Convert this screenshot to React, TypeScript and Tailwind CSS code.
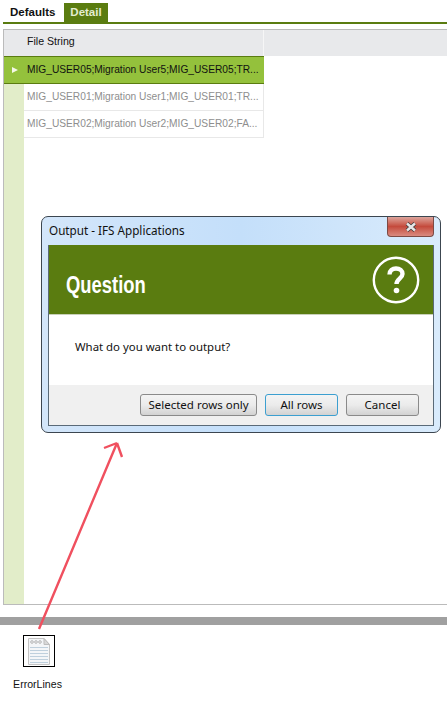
import React from "react";

const gridFont = "font-['Liberation_Sans',sans-serif]";

function DocIcon() {
  return (
    <svg width="24" height="29" viewBox="0 0 24 29">
      <path d="M1.5 1.5H17L22.5 7.5V27.5H1.5Z" fill="#f4f6f8" stroke="#c4c4c4" />
      <path d="M17 1.5V7.5H22.5Z" fill="#d8d8d8" stroke="#bdbdbd" />
      <circle cx="5" cy="5" r="1.3" fill="none" stroke="#b5b5b5" />
      <circle cx="9" cy="5" r="1.3" fill="none" stroke="#b5b5b5" />
      <circle cx="13" cy="5" r="1.3" fill="none" stroke="#b5b5b5" />
      <path
        d="M3 10.5H21M3 13.5H21M3 16.5H21M3 19.5H21M3 22.5H21M3 25.5H21"
        stroke="#bfd0dd"
        strokeWidth="1"
      />
    </svg>
  );
}

function DialogButton({ label, primary, width }: { label: string; primary?: boolean; width: string }) {
  return (
    <div
      className={`${width} flex h-[22px] items-center justify-center rounded-[3px] border bg-gradient-to-b from-[#f4f4f4] via-[#ebebeb] to-[#d2d2d2] text-[11.5px] text-[#111] ${
        primary ? "border-[#3c9fd0]" : "border-[#8a8a8a]"
      }`}
    >
      {label}
    </div>
  );
}

function OutputDialog() {
  return (
    <div className="absolute top-[216px] left-[41px] flex h-[217px] w-[400px] flex-col rounded-[7px] border border-[#3c4650] bg-gradient-to-r from-[#d3e6fa] via-[#c4dffa] to-[#d9ebfc] px-[6px] pb-[6px] font-['Noto_Sans',sans-serif]">
      <div className="flex h-[28px] shrink-0 items-start justify-between">
        <span className="pt-[4px] pl-[1px] text-[11.7px] leading-[18px] text-[#111]">Output - IFS Applications</span>
        <div className="flex h-[20px] w-[47px] items-center justify-center rounded-b-[4px] border border-t-0 border-[#7d4a44] bg-gradient-to-b from-[#dca49c] via-[#c44a3c] to-[#d98a80]">
          <svg width="14" height="10" viewBox="0 0 14 10">
            <path d="M3 1.5L11 8.5M11 1.5L3 8.5" stroke="#3c3c3c" strokeWidth="4" />
            <path d="M3 1.5L11 8.5M11 1.5L3 8.5" stroke="#e8e8e8" strokeWidth="2.4" />
          </svg>
        </div>
      </div>
      <div className="flex grow flex-col border border-t-0 border-[#5a6a78] bg-white">
        <div className="flex h-[70px] shrink-0 items-center justify-between border-b border-[#c8d0b8] bg-[#5a7c10] pr-[13px] pl-[17px]">
          <span className="mt-[12px] origin-left scale-x-[0.8] font-['Liberation_Sans',sans-serif] text-[23px] font-bold text-white">
            Question
          </span>
          <svg width="48" height="48" viewBox="0 0 48 48">
            <circle cx="24" cy="24" r="22.2" fill="none" stroke="#fff" strokeWidth="2.4" />
            <path
              d="M17.5 18.5C17.5 14.5 20.5 12.5 24 12.5C27.8 12.5 30.5 14.8 30.5 18C30.5 22.5 24.5 23 24.5 28"
              fill="none"
              stroke="#fff"
              strokeWidth="4.4"
            />
            <circle cx="24.5" cy="34.5" r="2.8" fill="#fff" />
          </svg>
        </div>
        <div className="grow pt-[23px] pl-[26px] text-[11.4px] leading-[18px] text-[#111]">What do you want to output?</div>
        <div className="flex h-[40px] shrink-0 items-start justify-end gap-[8px] bg-[#f0f0f0] pt-[9px] pr-[14px]">
          <DialogButton label="Selected rows only" width="w-[117px]" />
          <DialogButton label="All rows" width="w-[73px]" primary />
          <DialogButton label="Cancel" width="w-[73px]" />
        </div>
      </div>
    </div>
  );
}

function Row({ text }: { text: string }) {
  return (
    <div className="flex h-[27px] w-[240px] items-center border-r border-b border-[#e8e8e8] bg-white pl-[3px] text-[10.2px] whitespace-nowrap text-[#8e8e8e]">
      {text}
    </div>
  );
}

export default function App() {
  return (
    <div className={`relative h-[726px] w-[447px] overflow-hidden bg-white ${gridFont}`}>
      {/* Tabs */}
      <div className="ml-[3px] flex h-[24px] border-b-2 border-[#5a7c10] pt-[3px] text-[11.5px] font-bold">
        <div className="flex w-[61px] items-center pl-[7px] text-[#111]">Defaults</div>
        <div className="flex w-[44px] items-center justify-center bg-[#5a7c10] text-[#e4edd0]">Detail</div>
      </div>

      {/* Grid */}
      <div className="mt-[5px] ml-[3px] flex h-[576px] flex-col border-t border-b border-l border-[#bbbbbb]">
        <div className="flex h-[26px] shrink-0 bg-[#e8e9eb]">
          <div className="flex w-[260px] items-center border-r border-[#f6f6f6] pb-[2px] pl-[23px] text-[10.6px] text-[#111]">
            File String
          </div>
        </div>
        <div className="flex grow bg-white">
          <div className="w-[20px] shrink-0 bg-[#e2edc9]" />
          <div className="flex grow flex-col">
            <div className="-ml-[20px] flex h-[28px] w-[260px] items-center border-t border-b border-[#5a7c10] bg-[#94c13c] text-[10.2px] whitespace-nowrap text-[#111]">
              <div className="flex w-[23px] shrink-0 justify-center pr-[2px]">
                <svg width="6" height="6" viewBox="0 0 6 6">
                  <path d="M0 0L6 3L0 6Z" fill="#f4f8e8" />
                </svg>
              </div>
              MIG_USER05;Migration User5;MIG_USER05;TR...
            </div>
            <Row text="MIG_USER01;Migration User1;MIG_USER01;TR..." />
            <Row text="MIG_USER02;Migration User2;MIG_USER02;FA..." />
          </div>
        </div>
      </div>

      {/* Splitter */}
      <div className="mt-[12px] h-[8px] bg-[#a0a0a0]" />

      {/* Attachment */}
      <div className="ml-[14px] flex w-[50px] flex-col items-center pt-[10px]">
        <div className="flex h-[32px] w-[32px] items-center justify-center border border-black">
          <DocIcon />
        </div>
        <span className="mt-[10px] mr-[3px] text-[10.6px] leading-[14px] text-[#111]">ErrorLines</span>
      </div>

      <OutputDialog />

      {/* Annotation arrow */}
      <svg className="absolute top-0 left-0" width="447" height="726" viewBox="0 0 447 726">
        <path
          d="M39 629L117 443M117 443L104 448M117 443L122 457"
          fill="none"
          stroke="#f0505f"
          strokeWidth="2.4"
        />
      </svg>
    </div>
  );
}
